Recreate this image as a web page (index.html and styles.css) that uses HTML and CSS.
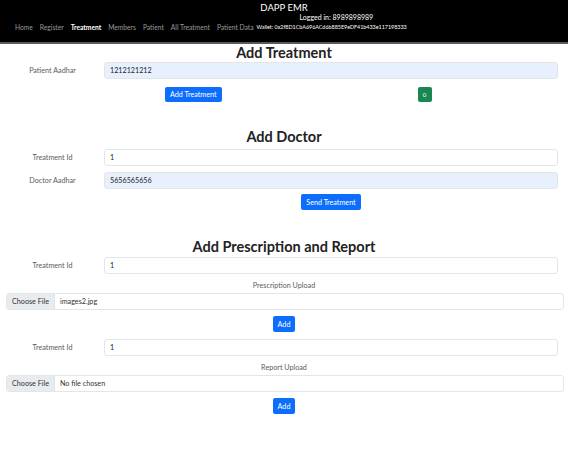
FILE: index.html
```html
<!DOCTYPE html>
<html>
<head>
<meta charset="utf-8">
<link rel="stylesheet" href="styles.css">
</head>
<body>
<header class="topbar">
  <div class="brand">DAPP EMR</div>
  <div class="navrow">
    <nav class="links">
      <a class="link">Home</a>
      <a class="link">Register</a>
      <a class="link active">Treatment</a>
      <a class="link">Members</a>
      <a class="link">Patient</a>
      <a class="link">All Treatment</a>
      <a class="link">Patient Data</a>
    </nav>
    <div class="account">
      <div class="logged">Logged in: 8989898989</div>
      <div class="wallet">Wallet: 0x2f8D1CbA696ACd6b885E9eDF41b433e117198333</div>
    </div>
  </div>
</header>

<main>
  <h2 class="title t1">Add Treatment</h2>
  <div class="row">
    <label class="lbl">Patient Aadhar</label>
    <div class="field auto">1212121212</div>
  </div>
  <div class="actions split">
    <button class="btn">Add Treatment</button>
    <span class="badge">0</span>
  </div>

  <h2 class="title t2">Add Doctor</h2>
  <div class="row">
    <label class="lbl">Treatment Id</label>
    <div class="field">1</div>
  </div>
  <div class="row r2">
    <label class="lbl">Doctor Aadhar</label>
    <div class="field auto">5656565656</div>
  </div>
  <div class="actions col">
    <button class="btn send">Send Treatment</button>
  </div>

  <h2 class="title t3">Add Prescription and Report</h2>
  <div class="row">
    <label class="lbl">Treatment Id</label>
    <div class="field">1</div>
  </div>
  <div class="upl">Prescription Upload</div>
  <div class="file"><span class="choose">Choose File</span><span class="fname">images2.jpg</span></div>
  <div class="actions center"><button class="btn add">Add</button></div>
  <div class="row r3">
    <label class="lbl">Treatment Id</label>
    <div class="field">1</div>
  </div>
  <div class="upl">Report Upload</div>
  <div class="file"><span class="choose">Choose File</span><span class="fname">No file chosen</span></div>
  <div class="actions center"><button class="btn add">Add</button></div>
</main>
</body>
</html>
```

FILE: styles.css
```css
* { box-sizing: border-box; }
body {
  margin: 0;
  font-family: Lato, "Noto Sans", sans-serif;
  font-size: 7.2px;
  color: #212529;
  background: #fff;
}
.topbar {
  background: #000;
  height: 44px;
  border-bottom: 2px solid #5a5a5a;
  color: #fff;
}
.brand {
  text-align: center;
  font-size: 9.5px;
  padding-top: 2px;
  height: 21px;
  line-height: 12px;
}
.navrow {
  display: flex;
  align-items: flex-start;
  padding-left: 15px;
}
.links {
  display: flex;
  gap: 7px;
  padding-top: 1px;
}
.link {
  color: #9a9a9a;
  font-size: 6.7px;
  line-height: 10px;
}
.link.active { color: #fff; font-weight: 700; }
.account {
  margin-left: 3px;
  margin-top: -9px;
}
.logged {
  font-size: 7px;
  padding-left: 43px;
  line-height: 10px;
}
.wallet {
  font-size: 5.4px;
  line-height: 9px;
  margin-top: 1px;
}
.title {
  margin: 0;
  text-align: center;
  font-size: 14.5px;
  font-weight: 700;
  line-height: 16px;
  color: #222;
}
.t1 { margin-top: 1px; height: 17px; }
.t2 { margin-top: 27px; height: 20px; }
.t3 { margin-top: 29px; height: 18px; }
.row {
  display: flex;
  align-items: center;
  padding-left: 6px;
  padding-right: 10px;
}
.r2 { margin-top: 6px; }
.r3 { margin-top: 7px; }
.lbl {
  width: 93px;
  text-align: center;
  color: #5c5c5c;
}
.field {
  flex: 1;
  margin-left: 5px;
  height: 17px;
  border: 1px solid #e3e6e9;
  border-radius: 3px;
  padding-left: 5px;
  line-height: 15px;
  color: #212529;
  background: #fff;
}
.field.auto { background: #e8f0fe; }
.actions { display: flex; margin-top: 8px; }
.actions.center { justify-content: center; margin-top: 6px; }
.actions.col { justify-content: center; padding-left: 104px; padding-right: 10px; margin-top: 5px; }
.actions.split { padding-left: 165px; }
.btn {
  background: #0d6efd;
  color: #fff;
  border: 0;
  border-radius: 2px;
  font-family: inherit;
  font-size: 7.2px;
  height: 15px;
  padding: 0 5px;
}
.btn.send { height: 16px; }
.btn.add { height: 16px; }
.badge {
  margin-left: 196px;
  width: 14px;
  height: 15px;
  background: #198754;
  border-radius: 2px;
  color: #fff;
  font-size: 6px;
  display: flex;
  align-items: center;
  justify-content: center;
}
.upl {
  text-align: center;
  color: #5c5c5c;
  margin-top: 7px;
  line-height: 10px;
}
.file {
  margin: 2px 4px 0 6px;
  height: 17px;
  border: 1px solid #e3e6e9;
  border-radius: 3px;
  display: flex;
  align-items: center;
  overflow: hidden;
}
.choose {
  background: #e9ecef;
  height: 100%;
  padding: 0 5px;
  display: flex;
  align-items: center;
  border-right: 1px solid #dee2e6;
  color: #333;
}
.fname { padding-left: 5px; color: #333; }
```
